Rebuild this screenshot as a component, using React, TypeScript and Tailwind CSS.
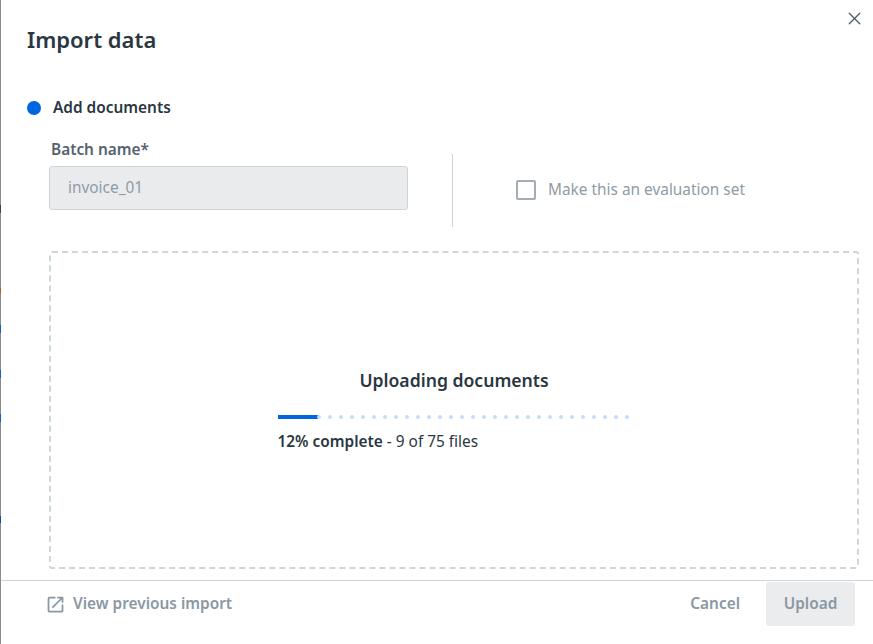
import React from 'react';
import { X } from 'lucide-react';

const dots = Array.from({ length: 28 });

export default function App() {
  return (
    <div className="flex h-[644px] w-[873px] overflow-hidden bg-white font-['Noto_Sans',sans-serif] text-[#2a3742]">
      {/* sliver of the page behind the modal */}
      <div className="relative h-full w-px shrink-0 bg-[#8c8c8c]">
        <div className="absolute left-0 top-[205px] h-[8px] w-px bg-[#444444]" />
        <div className="absolute left-0 top-[288px] h-[5px] w-px bg-[#a5622a]" />
        <div className="absolute left-0 top-[325px] h-[8px] w-px bg-[#0b62c4]" />
        <div className="absolute left-0 top-[370px] h-[8px] w-px bg-[#0b62c4]" />
        <div className="absolute left-0 top-[414px] h-[8px] w-px bg-[#0b62c4]" />
        <div className="absolute left-0 top-[516px] h-[7px] w-px bg-[#0b50b4]" />
      </div>

      <div className="relative flex min-w-0 flex-1 flex-col">
        <button className="absolute right-[8px] top-[8px] text-[#4a5863]">
          <X className="h-[21px] w-[21px]" strokeWidth={1.4} />
        </button>

        {/* Header */}
        <h1 className="ml-[26px] mt-[24px] text-[22px] font-semibold leading-[30px]">Import data</h1>

        {/* Step title */}
        <div className="ml-[26px] mt-[43px] flex items-center gap-[12px]">
          <span className="h-[14px] w-[14px] rounded-full bg-[#0065e0]" />
          <span className="text-[15.4px] font-semibold leading-[22px]">Add documents</span>
        </div>

        {/* Batch row */}
        <div className="ml-[48px] mt-[19px] flex h-[89px]">
          <div className="w-[359px]">
            <label className="ml-[2px] mt-px block text-[15.4px] font-semibold leading-[22px] text-[#55636f]">Batch name*</label>
            <div className="mt-[5px] flex h-[44px] items-center rounded-[3px] border border-[#cdd5da] bg-[#e9ebed] px-[18px] text-[15.4px] text-[#8f9ba5]">
              invoice_01
            </div>
          </div>
          <div className="ml-[44px] mt-[16px] h-[73px] w-px bg-[#cbd5db]" />
          <div className="ml-[63px] mt-[42px] flex h-[20px] items-center gap-[12px]">
            <span className="h-[20px] w-[20px] rounded-[2px] border-2 border-[#a3adb5]" />
            <span className="text-[15.4px] text-[#8f9ba5]">Make this an evaluation set</span>
          </div>
        </div>

        {/* Upload area */}
        <div className="ml-[48px] mt-[24px] flex h-[318px] w-[810px] flex-col items-center rounded-[3px] border-2 border-dashed border-[#cdd6da]">
          <div className="mt-[115px] w-[353px]">
            <p className="text-center text-[17.6px] font-semibold leading-[24px]">Uploading documents</p>
            <div className="mt-[23px] flex h-[4px] items-center">
              <div className="h-[4px] w-[40px] bg-[#0065e0]" />
              <span className="-ml-px h-[4px] w-[4px] rounded-full bg-[#c6dcf8]" />
              <div className="ml-[7px] mr-[2px] flex flex-1 justify-between">
                {dots.map((_, i) => (
                  <span key={i} className="h-[4px] w-[4px] rounded-full bg-[#c6dcf8]" />
                ))}
              </div>
            </div>
            <p className="mt-[13px] text-[15.4px] leading-[20px]">
              <span className="font-semibold">12% complete</span> - 9 of 75 files
            </p>
          </div>
        </div>

        {/* Footer */}
        <div className="mt-[11px] flex h-[64px] items-start justify-between border-t border-[#cbd5db] pl-[44px] pr-[18px] pt-[1px]">
          <div className="mt-[11px] flex items-center gap-[7px] text-[#8a98a3]">
            <svg className="h-[21px] w-[21px]" viewBox="0 0 24 24" fill="currentColor">
              <path d="M19 19H5V5h7V3H5a2 2 0 0 0-2 2v14a2 2 0 0 0 2 2h14c1.1 0 2-.9 2-2v-7h-2v7zM14 3v2h3.59l-9.83 9.83 1.41 1.41L19 6.41V10h2V3h-7z" />
            </svg>
            <span className="text-[15.4px] font-semibold leading-[22px]">View previous import</span>
          </div>
          <div className="flex h-[44px] items-center gap-[26px]">
            <span className="text-[15.4px] font-semibold text-[#8a98a3]">Cancel</span>
            <button className="h-[44px] w-[89px] rounded-[3px] bg-[#ebecee] text-[15.4px] font-semibold text-[#8a98a3]">Upload</button>
          </div>
        </div>
      </div>
    </div>
  );
}
